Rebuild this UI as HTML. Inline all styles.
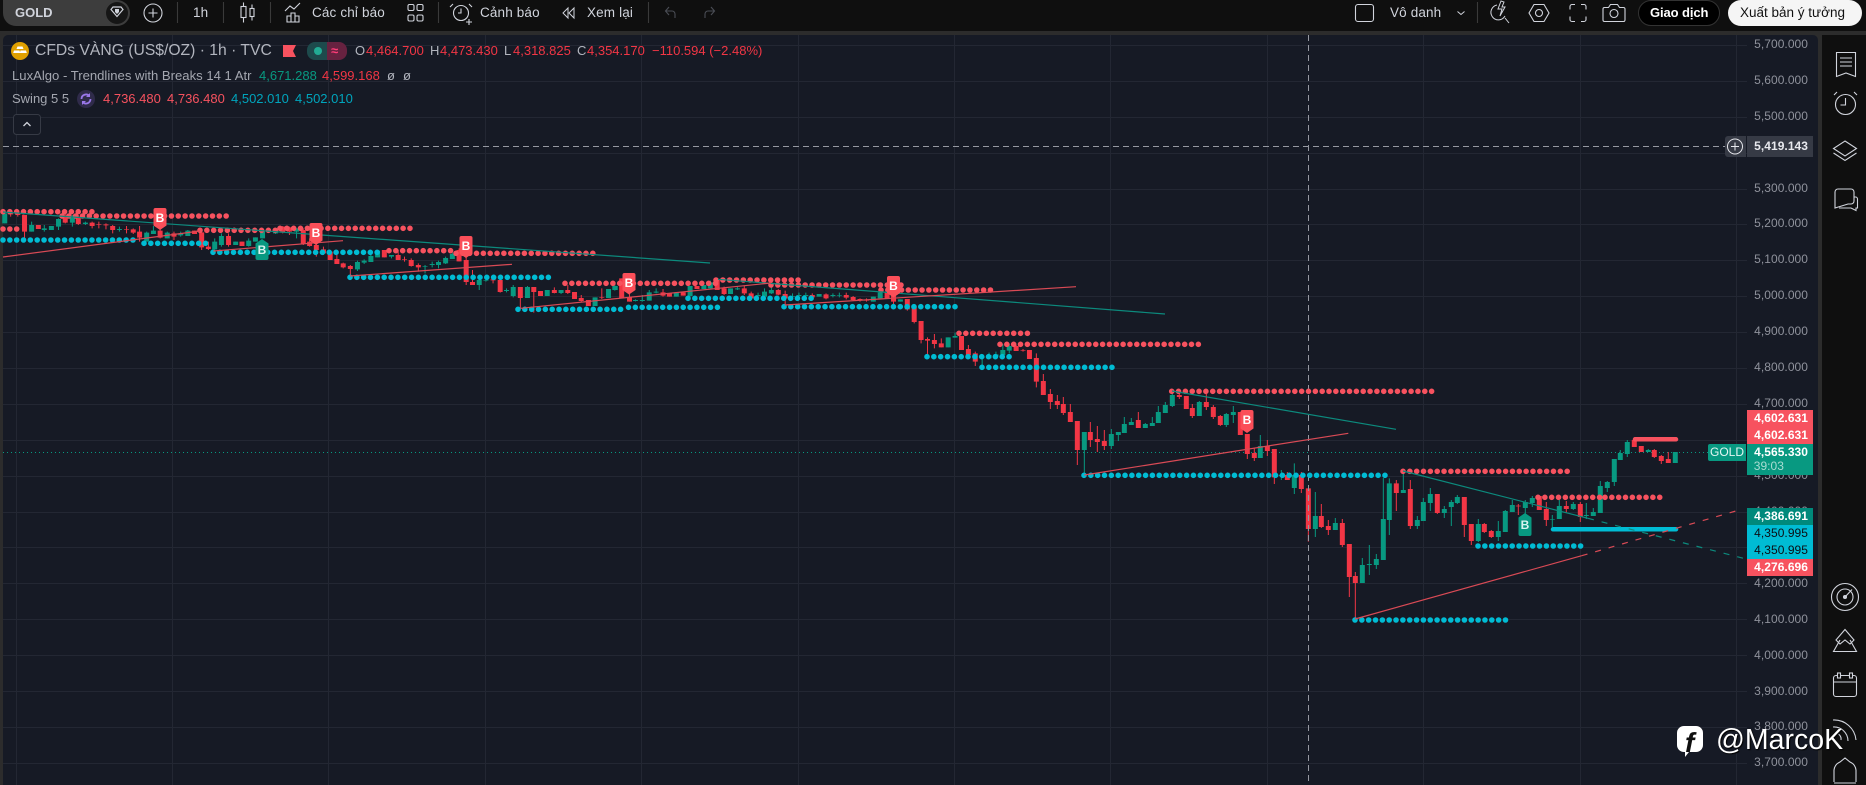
<!DOCTYPE html>
<html><head><meta charset="utf-8"><style>
html,body{margin:0;padding:0;background:#2c2c2c;width:1866px;height:785px;overflow:hidden;font-family:"Liberation Sans","Noto Sans CJK SC",sans-serif}
#top{position:absolute;left:0;top:0;width:1866px;height:31px;background:#0f0f0f}
#side{position:absolute;left:1822px;top:35px;width:44px;height:750px;background:#0f0f0f}
#panel{position:absolute;left:3px;top:35px;width:1815px;height:750px;background:#161a25;border-radius:5px 5px 0 0}
svg.full{position:absolute;left:0;top:0}
.t{position:absolute;white-space:nowrap;line-height:16px;font-size:13px}
.a{position:absolute;right:58px;white-space:nowrap;line-height:16px;font-size:12px;color:#8f929c;letter-spacing:.05px}
.n{color:#d1d4dc;font-size:13.5px;top:5px;letter-spacing:.15px}
.tag{position:absolute;left:1747px;width:66px}
.v{position:absolute;right:58px;font-size:12px;line-height:16px;color:#fff;font-weight:bold;white-space:nowrap;letter-spacing:.05px}
.r{color:#f23645}.gy{color:#b2b5be}
</style></head><body>
<div id="top"></div><div id="panel"></div><div id="side"></div>

<svg class="full" width="1866" height="785" viewBox="0 0 1866 785" fill="none">
<!-- grid -->
<path stroke="#232733" stroke-width="1" d="M3 45.5H1747M3 81.5H1747M3 117.5H1747M3 153.5H1747M3 189.5H1747M3 224.5H1747M3 260.5H1747M3 296.5H1747M3 332.5H1747M3 368.5H1747M3 404.5H1747M3 440.5H1747M3 476.5H1747M3 512.5H1747M3 547.5H1747M3 583.5H1747M3 619.5H1747M3 655.5H1747M3 691.5H1747M3 727.5H1747M3 763.5H1747M16.5 35V785M172.5 35V785M328.5 35V785M485.5 35V785M641.5 35V785M798.5 35V785M954.5 35V785M1110.5 35V785M1267.5 35V785M1423.5 35V785M1580.5 35V785M1736.5 35V785"/>
<path stroke="#089981" stroke-width="1" stroke-dasharray="1 3" d="M3 452.5H1708"/>

<!-- zoom-3 segment -->
<g transform="translate(0 190) scale(.3954 .3333)">
<path vector-effect="non-scaling-stroke" stroke="#089981" stroke-width="1" d="M12 60V100M80 95V125M112 105V125M130 108V120M148 85V120M183 75V110M216 95V105M302 110V125M371 125V155M388 108V132M423 125V145M457 125V140M475 120V138M543 145V185M560 130V170M596 155V165M629 145V170M646 142V155M664 118V145M697 115V132M750 115V145M904 212V243M921 208V222M938 195V216M955 180V202M990 195V205M1075 225V250M1093 215V232M1109 212V235M1127 200V222M1144 188V207M1212 265V300M1229 262V275M1281 295V307M1298 285V322M1334 288V324M1384 300V318M1419 300V312M1505 322V348M1539 297V324M1556 288V300"/>
<path vector-effect="non-scaling-stroke" stroke="#089981" stroke-width="5" d="M12 70V100M80 105V125M112 115V120M130 108V120M148 87V110M183 80V98M216 98V102M302 117V120M371 128V155M388 122V132M423 128V145M457 130V136M475 122V138M543 155V178M560 138V165M596 155V165M629 152V168M646 142V155M664 122V145M697 118V130M750 115V125M904 216V238M921 212V218M938 198V216M955 182V202M990 195V200M1075 228V230M1093 222V225M1109 216V225M1127 204V220M1144 192V207M1212 270V285M1229 270V272M1281 300V303M1298 291V318M1334 291V324M1384 300V318M1419 300V309M1505 322V348M1539 297V324M1556 288V300"/>
<path vector-effect="non-scaling-stroke" stroke="#f23645" stroke-width="1" d="M27 65V80M45 60V80M62 75V145M97 105V117M165 70V100M198 75V105M233 95V115M250 95V115M268 100V118M285 105V130M320 108V130M337 115V132M353 108V155M405 115V145M440 125V150M492 122V132M510 115V180M527 155V180M578 130V170M612 155V168M715 108V130M732 110V135M767 115V165M783 145V170M800 140V200M818 170V195M835 180V210M852 195V222M868 218V235M886 225V260M972 180V202M1007 180V210M1023 200V215M1040 205V230M1058 220V245M1161 175V214M1179 200V285M1195 240V285M1247 262V280M1265 268V308M1316 291V355M1350 291V368M1367 303V318M1402 292V310M1436 285V312M1453 306V327M1470 315V335M1488 330V348M1522 295V327"/>
<path vector-effect="non-scaling-stroke" stroke="#f23645" stroke-width="5" d="M27 68V73M45 70V75M62 75V125M97 105V117M165 80V98M198 80V102M233 98V108M250 103V105M268 103V106M285 108V120M320 118V120M337 118V128M353 125V143M405 122V143M440 130V140M492 122V132M510 127V172M527 170V177M578 138V165M612 155V168M715 110V128M732 112V125M767 120V162M783 155V168M800 165V180M818 178V190M835 185V210M852 207V222M868 220V232M886 228V237M972 180V202M1007 195V210M1023 207V209M1040 210V228M1058 225V232M1161 180V214M1179 210V276M1195 276V285M1247 268V271M1265 270V306M1316 291V324M1350 291V306M1367 303V318M1402 300V309M1436 300V309M1453 306V327M1470 324V333M1488 330V348M1522 322V324"/>
</g>

<!-- zoom-4 segment -->
<g transform="translate(500 260) scale(.4592 .3333)">
<path vector-effect="non-scaling-stroke" stroke="#089981" stroke-width="1" d="M250 72V92M295 118V124M310 105V125M325 90V122M340 85V100M384 97V110M414 78V110M444 75V87M458 62V85M502 85V102M517 80V90M562 98V115M576 85V110M591 72V102M637 100V118M651 98V115M666 98V112M695 102V110M725 100V112M739 98V112M813 110V125M828 85V115M872 118V125M976 232V262M991 218V233M1050 285V318M1065 278V295M1080 275V295M1095 252V288M1109 252V280"/>
<path vector-effect="non-scaling-stroke" stroke="#089981" stroke-width="5" d="M250 78V90M295 120V123M310 120V123M325 97V122M340 95V98M384 97V110M414 78V108M444 75V87M458 67V85M502 85V102M517 85V88M562 105V108M576 95V110M591 90V100M637 108V110M651 105V108M666 105V108M695 102V110M725 105V108M739 105V107M813 110V125M828 97V115M872 118V125M976 232V262M991 228V233M1050 290V293M1065 285V295M1080 283V290M1095 270V285M1109 258V272"/>
<path vector-effect="non-scaling-stroke" stroke="#f23645" stroke-width="1" d="M265 55V115M282 100V125M355 87V110M369 100V110M399 97V107M429 78V87M473 57V90M488 80V105M532 78V105M547 95V118M606 87V106M621 92V135M680 100V118M710 100V118M754 98V118M769 108V122M784 115V125M798 115V125M843 97V117M857 100V135M887 117V152M902 140V190M917 183V250M931 232V290M946 222V265M961 235V262M1005 228V270M1020 255V290M1035 275V318M1124 255V273M1139 267V275M1153 270V297M1168 280V382"/>
<path vector-effect="non-scaling-stroke" stroke="#f23645" stroke-width="5" d="M265 55V115M282 112V125M355 97V107M369 100V110M399 97V107M429 78V87M473 57V90M488 85V102M532 85V100M547 100V115M606 90V104M621 102V115M680 105V112M710 103V115M754 105V113M769 111V120M784 117V120M798 120V122M843 97V117M857 105V125M887 117V148M902 140V186M917 183V240M931 237V242M946 240V252M961 250V262M1005 228V270M1020 267V285M1035 280V305M1124 258V273M1139 270V272M1153 270V297M1168 294V365"/>
</g>

<!-- zoom-5 segment -->
<g transform="translate(1040 370) scale(.3333)">
<path vector-effect="non-scaling-stroke" stroke="#089981" stroke-width="1" d="M133 186V315M214 177V237M235 186V213M253 141V189M274 144V165M316 159V174M337 141V168M355 108V159M376 96V129M397 63V111M478 93V138M559 129V171M580 108V159M661 195V264"/>
<path vector-effect="non-scaling-stroke" stroke="#089981" stroke-width="5" d="M133 186V240M214 192V228M235 186V195M253 162V189M274 156V165M316 162V174M337 159V168M355 126V159M376 105V129M397 75V108M478 96V138M559 132V165M580 126V135M661 228V264"/>
<path vector-effect="non-scaling-stroke" stroke="#f23645" stroke-width="1" d="M10 12V75M31 57V117M52 75V117M70 81V135M91 102V156M112 153V285M151 156V231M172 168V246M193 180V240M295 126V174M418 63V87M439 78V117M457 102V144M499 72V120M520 105V147M541 135V168M601 126V195M622 192V267M643 234V273"/>
<path vector-effect="non-scaling-stroke" stroke="#f23645" stroke-width="5" d="M10 33V75M31 72V96M52 93V105M70 102V129M91 126V156M112 153V240M151 186V210M172 207V216M193 213V228M295 150V174M418 75V81M439 78V117M457 114V138M499 96V111M520 111V141M541 138V165M601 126V195M622 192V252M643 249V264"/>
</g>

<!-- zoom-6 segment -->
<g transform="translate(1260 420) scale(.3333)">
<path vector-effect="non-scaling-stroke" stroke="#089981" stroke-width="1" d="M64 150V180M103 130V222M166 216V351M226 294V330M307 414V489M328 375V465M349 402V447M370 174V420M388 175V345M430 153V219M472 288V327M490 234V303M511 204V273M553 258V294M574 240V318M592 225V252M655 297V366M715 303V363M736 270V336M757 240V276M796 240V282M817 228V261M877 285V321M898 240V297M940 246V270M979 249V297M1000 264V288M1021 183V279M1042 183V216M1063 117V198M1081 90V120M1102 60V111M1165 87V96M1246 96V129"/>
<path vector-effect="non-scaling-stroke" stroke="#089981" stroke-width="5" d="M64 165V168M103 165V204M166 288V327M226 309V330M307 435V489M328 432V435M349 417V435M370 297V420M388 190V300M430 210V219M472 300V318M490 246V303M511 222V249M553 267V279M574 246V261M592 231V249M655 312V363M715 333V351M736 273V336M757 255V276M796 246V264M817 234V249M877 297V299M898 258V297M940 252V267M979 285V288M1000 276V288M1021 198V279M1042 186V204M1063 117V186M1081 99V120M1102 66V102M1165 90V96M1246 96V129"/>
<path vector-effect="non-scaling-stroke" stroke="#f23645" stroke-width="1" d="M22 60V108M43 87V192M82 156V180M124 156V219M145 205V365M184 252V324M205 300V345M247 297V381M268 372V531M286 456V600M409 180V273M451 180V327M532 222V282M613 231V351M634 312V375M673 309V339M694 330V354M775 252V285M838 228V270M859 246V318M919 243V279M961 246V306M1123 60V81M1144 78V96M1183 87V114M1204 105V132M1225 96V129"/>
<path vector-effect="non-scaling-stroke" stroke="#f23645" stroke-width="5" d="M22 78V93M43 87V172M82 165V180M124 165V207M145 205V327M184 288V321M205 318V330M247 309V375M268 372V471M286 468V489M409 190V219M451 207V318M532 222V279M613 231V315M634 312V363M673 312V336M694 333V351M775 257V259M838 228V270M859 267V300M919 258V267M961 252V291M1123 60V81M1144 78V96M1183 90V111M1204 108V123M1225 117V129"/>
</g>

<!-- crosshair -->
<path stroke="#9598a1" stroke-width="1" stroke-dasharray="6 4" d="M1308.5 35V785M3 146.5H1725"/>

<!-- dot rows -->
<g stroke="#f7525f" stroke-width="5.600" stroke-linecap="round" stroke-dasharray="0 6.84">
<path d="M3 211.7H93M62 216H230M3 229H20M200 230.3H277M280 228.3H413M389 250.7H456M456 253.3H597M565 283.3H716M716 280H801M771 285H907M881 290H992M959 333.3H1032M1000 344.3H1203M1171.7 391.3H1433M1403 471.3H1570M1538 497.3H1604M1605 497.3H1664"/>
</g>
<g stroke="#00bcd4" stroke-width="5.600" stroke-linecap="round" stroke-dasharray="0 6.84">
<path d="M3 240H139M144 243.3H206M213 252.3H380M350 277.3H550M518 309.3H625M628.5 307.3H720M688 298.3H815M784 306.7H958M927 356.7H1011M982 367.3H1114M1084 475.3H1386M1478 546H1582M1355 620H1508"/>
</g>
<path stroke="#f7525f" stroke-width="4.5" stroke-linecap="round" d="M1635 439.3H1676"/>
<path stroke="#00bcd4" stroke-width="4.5" stroke-linecap="round" d="M1553 529.3H1676"/>

<!-- trend lines -->
<g stroke-width="1.2">
<path stroke="#0c8a7d" d="M3 212L710 263M718 279.3L1165 314M1172 391L1396 429.3M1403 471L1588 518.3"/>
<path stroke="#0c8a7d" stroke-dasharray="6 8" d="M1588 518.3L1746 559"/>
<path stroke="#d94a55" d="M3 257L200 231M213.4 251L343 240.7M350 276L512 264.3M520.6 308.3L771 283M784.7 305L1076 286.7M1084.3 475L1348.3 433.3M1355 619L1581.7 555.7"/>
<path stroke="#d94a55" stroke-dasharray="6 8" d="M1581.7 555.7L1741.7 509.3"/>
</g>

<!-- B labels -->
<g font-family="Liberation Sans,sans-serif" font-size="12" font-weight="bold" text-anchor="middle">
<g fill="#fb4f59">
<path d="M155.5 208h9a2 2 0 0 1 2 2v15.500l-6.500 4.500l-6.500-4.500V210a2 2 0 0 1 2-2z"/>
<path d="M311.500 223h9a2 2 0 0 1 2 2v15.500l-6.500 4.500l-6.500-4.500V225a2 2 0 0 1 2-2z"/>
<path d="M461.500 236h9a2 2 0 0 1 2 2v15.500l-6.500 4.500l-6.500-4.500V238a2 2 0 0 1 2-2z"/>
<path d="M624.500 273h9a2 2 0 0 1 2 2v15l-6.500 4.500l-6.500-4.500V275a2 2 0 0 1 2-2z"/>
<path d="M889 276h9a2 2 0 0 1 2 2v15l-6.500 4.500l-6.500-4.500V278a2 2 0 0 1 2-2z"/>
<path d="M1242.500 410h9a2 2 0 0 1 2 2v16.500l-6.500 4.500l-6.500-4.500V412a2 2 0 0 1 2-2z"/>
</g>
<g fill="#089981">
<path d="M262 239l6.500 4.500V258a2 2 0 0 1-2 2h-9a2 2 0 0 1-2-2v-14.500z"/>
<path d="M1525 513l6.500 4.500V534a2 2 0 0 1-2 2h-9a2 2 0 0 1-2-2v-16.500z"/>
</g>
<g fill="#fff">
<text x="160" y="222">B</text><text x="316" y="237">B</text><text x="466" y="250">B</text><text x="629" y="287">B</text><text x="893.500" y="290">B</text><text x="1247" y="424">B</text>
</g>
<g fill="#d8f3ef">
<text x="262" y="254">B</text><text x="1525" y="529">B</text>
</g>
</g>

<!-- legend icons -->
<circle cx="20" cy="51" r="9" fill="#e0a000"/>
<path fill="#fff" d="M17.500 46.500h5l1 2.500h-7zM14 50.500h5.500l.8 2.500H13.200zM20.500 50.500H26l.8 2.500h-7z"/>
<path fill="#f7525f" d="M283 45h13l-3 6l3 6h-13z"/>
<rect x="307" y="42" width="20" height="18" rx="8" fill="#1d4a4c"/><rect x="317" y="42" width="10" height="18" fill="#1d4a4c"/>
<rect x="327" y="42" width="20" height="18" rx="8" fill="#672240"/><rect x="327" y="42" width="10" height="18" fill="#672240"/>
<circle cx="318" cy="51" r="4" fill="#22ab94"/>
<circle cx="86" cy="99" r="9" fill="#2f2b4a"/>
<path stroke="#9a78ea" stroke-width="1.800" d="M81.500 99a4.500 4.500 0 0 1 8-2.800M90.500 99a4.500 4.500 0 0 1-8 2.800"/>
<path fill="#9a78ea" d="M90 93v4h-4zM82 105v-4h4z"/>
<rect x="13.500" y="114.500" width="27" height="20" rx="3" stroke="#363a45" fill="#161a25"/>
<path stroke="#d1d4dc" stroke-width="1.300" d="M23.500 126l3.500-3.500l3.500 3.500"/>

<!-- top bar shapes -->
<path fill="#3d3d3d" d="M3 0H117V26H16A13 13 0 0 1 3 13z"/>
<circle cx="117" cy="13" r="13" fill="#3d3d3d"/>
<circle cx="117" cy="13" r="11" fill="#161616"/>
<path stroke="#d1d4dc" stroke-width="1.200" d="M111 9.500l2-2.500h8l2 2.500l-6 7z"/>
<path fill="#d1d4dc" d="M115 9h4v3l-2 2l-2-2z"/>
<g stroke="#d1d4dc" stroke-width="1.100">
<circle cx="153" cy="13" r="9"/><path d="M148.500 13h9M153 8.500v9"/>
<path stroke="#3a3a3a" d="M177.500 2v21M223.500 2v21M270.500 2v21M438.500 2v21M648.500 2v21M1477.500 2v21"/>
<path d="M243.500 2.500v20"/><rect x="241" y="6.500" width="5" height="11" fill="#0f0f0f"/>
<path d="M252 4.500v16"/><rect x="250" y="8.500" width="4" height="8" fill="#0f0f0f"/>
<path d="M287 22v-6h4v6zM291 22v-9h4v9zM295 22v-6h4v6zM285 11l5-5l4 3l6-6"/>
<rect x="408" y="4.500" width="6" height="6" rx="1.500"/><rect x="417" y="4.500" width="6" height="6" rx="1.500"/><rect x="408" y="15" width="6" height="6" rx="1.500"/><rect x="417" y="15" width="6" height="6" rx="1.500"/>
<circle cx="461" cy="13" r="7.500"/><path d="M461 8.500v4.500h-3M453 4l-3 3M469 4l3 3M466 22h6M469 19v6"/>
<path d="M568 8l-5 5l5 5zM574 8l-5 5l5 5z" stroke-width="1"/>
<rect x="1355.500" y="4.500" width="18" height="17" rx="2.500"/>
<path stroke-width="1" d="M1457.500 11.500l3.500 3l3.500-3"/>
<path d="M1497 5a7.500 7.500 0 1 0 8 11M1505 18l4 5M1501 1l-3 8h4l-2 7l5-9h-3l2-5z" stroke-width="1"/>
<path d="M1534 4.500h10l5 8.500l-5 8.500h-10l-5-8.500z"/><circle cx="1539" cy="13" r="3.500"/>
<path d="M1570 9.500v-3a2 2 0 0 1 2-2h3M1581 4.500h3a2 2 0 0 1 2 2v3M1570 16.500v3a2 2 0 0 0 2 2h3M1586 16.500v3a2 2 0 0 1-2 2h-3"/>
<path d="M1605 7.500h4l2-3h7l2 3h4a1.500 1.500 0 0 1 1.500 1.500v11a1.500 1.500 0 0 1-1.500 1.500h-19a1.500 1.500 0 0 1-1.500-1.500V9a1.500 1.500 0 0 1 1.500-1.500z" transform="translate(-.5 0)"/><circle cx="1614" cy="13.500" r="4"/>
</g>
<g stroke="#4a4d55" stroke-width="1.100"><path d="M675 18v-4a3 3 0 0 0-3-3h-6M669 7l-3.500 4l3.500 4M705 18v-4a3 3 0 0 1 3-3h6M711 7l3.500 4l-3.500 4"/></g>
<rect x="1638.500" y="0.500" width="81" height="25" rx="12.500" fill="#000" stroke="#333"/>
<rect x="1728" y="0" width="134" height="26" rx="13" fill="#f5f5f5"/>

<!-- side icons -->
<g stroke="#d1d4dc" stroke-width="1.100">
<path d="M1836.500 52.500h19v24l-9.500-3.500l-9.500 3.500zM1840 58h12M1840 62h12M1840 66h12"/>
<circle cx="1845.500" cy="104.500" r="10"/><path d="M1845.500 98v7h-5M1834 95l3-3M1857 95l-3-3"/>
<path d="M1845 141l11.500 7.500l-11.500 7.500l-11.500-7.500zM1833.500 153l11.500 7.500l11.500-7.500"/>
<path d="M1835 192a3 3 0 0 1 3-3h13a3 3 0 0 1 3 3v9a3 3 0 0 1-3 3h-3l-13 4zM1854 197h1.500a2 2 0 0 1 2 2v9l-1.500 0l0 2.500l-5-2.500h-12"/>
<circle cx="1845" cy="597" r="13.500"/><circle cx="1845" cy="597" r="8"/><circle cx="1845" cy="597" r="1.500" fill="#d1d4dc"/><path d="M1845 597l7-7.500"/>
<path d="M1845 629.500l9 10.500l-4 4l-5-4l-5 4l-4-4zM1840 640l-6.500 11.500h23l-6.500-11.500"/>
<rect x="1833.500" y="675.500" width="23" height="21" rx="2.500"/><path d="M1833.500 682h23"/><rect x="1837.500" y="673" width="3" height="5" fill="#0f0f0f"/><rect x="1849.500" y="673" width="3" height="5" fill="#0f0f0f"/>
<path d="M1833 720a22 22 0 0 1 23 20M1833 727a14 14 0 0 1 15 14M1835 733a6 6 0 0 1 6 7"/>
<path d="M1834 782v-12a10 10 0 0 1 6-8l5-4l5 4a10 10 0 0 1 6 8v12M1834 783h22"/>
</g>

<!-- watermark icon -->
<path fill="#fff" d="M1684 726h12a7 7 0 0 1 7 7v12a7 7 0 0 1-7 7h-7l-4 5v-5h-1a7 7 0 0 1-7-7v-12a7 7 0 0 1 7-7z"/>
<text x="1685" y="752" font-family="Liberation Sans,sans-serif" font-size="28" font-weight="bold" font-style="italic" fill="#0f0f0f">f</text>
</svg>

<!-- top bar text -->
<div class="t" style="left:15px;top:5px;font-weight:bold;color:#d1d4dc;font-size:13px">GOLD</div>
<div class="t n" style="left:193px">1h</div>
<div class="t n" style="left:312px">Các chỉ báo</div>
<div class="t n" style="left:480px">Cảnh báo</div>
<div class="t n" style="left:587px">Xem lại</div>
<div class="t n" style="left:1390px">Vô danh</div>
<div class="t" style="left:1650px;top:5px;color:#fff;font-size:13px;font-weight:bold;letter-spacing:-.1px">Giao dịch</div>
<div class="t" style="left:1740px;top:5px;color:#111;font-size:13.500px">Xuất bản ý tưởng</div>

<!-- legend -->
<div class="t gy" style="left:35px;top:43px;font-size:15.700px">CFDs VÀNG (US$/OZ) · 1h · TVC</div>
<div class="t" style="left:331px;top:43px;color:#ff3d78;font-size:13px;font-weight:bold">≈</div>
<div class="t gy" style="left:355px;top:43px">O</div><div class="t r" style="left:366px;top:43px">4,464.700</div>
<div class="t gy" style="left:430px;top:43px">H</div><div class="t r" style="left:440px;top:43px">4,473.430</div>
<div class="t gy" style="left:504px;top:43px">L</div><div class="t r" style="left:513px;top:43px">4,318.825</div>
<div class="t gy" style="left:577px;top:43px">C</div><div class="t r" style="left:587px;top:43px">4,354.170</div>
<div class="t r" style="left:652px;top:43px">−110.594 (−2.48%)</div>
<div class="t" style="left:12px;top:68px;color:#a4a7b0;font-size:13.100px">LuxAlgo - Trendlines with Breaks 14 1 Atr</div>
<div class="t" style="left:259px;top:68px;color:#089981">4,671.288</div>
<div class="t r" style="left:322px;top:68px">4,599.168</div>
<div class="t" style="left:387px;top:68px;color:#b2b5be">ø</div><div class="t" style="left:403px;top:68px;color:#b2b5be">ø</div>
<div class="t" style="left:12px;top:91px;color:#a4a7b0">Swing 5 5</div>
<div class="t" style="left:103px;top:91px;color:#f7525f">4,736.480</div>
<div class="t" style="left:167px;top:91px;color:#f7525f">4,736.480</div>
<div class="t" style="left:231px;top:91px;color:#00a5bd">4,502.010</div>
<div class="t" style="left:295px;top:91px;color:#00a5bd">4,502.010</div>

<!-- axis -->
<div class="a" style="top:36px">5,700.000</div><div class="a" style="top:72px">5,600.000</div><div class="a" style="top:108px">5,500.000</div><div class="a" style="top:180px">5,300.000</div><div class="a" style="top:215px">5,200.000</div><div class="a" style="top:251px">5,100.000</div><div class="a" style="top:287px">5,000.000</div><div class="a" style="top:323px">4,900.000</div><div class="a" style="top:359px">4,800.000</div><div class="a" style="top:395px">4,700.000</div><div class="a" style="top:467px">4,500.000</div><div class="a" style="top:503px">4,400.000</div><div class="a" style="top:575px">4,200.000</div><div class="a" style="top:611px">4,100.000</div><div class="a" style="top:647px">4,000.000</div><div class="a" style="top:683px">3,900.000</div><div class="a" style="top:718px">3,800.000</div><div class="a" style="top:754px">3,700.000</div>

<!-- price tags -->
<div style="position:absolute;left:1725px;top:136px;width:21px;height:21px;background:#363a45;border-radius:3px 0 0 3px"></div>
<svg style="position:absolute;left:1725px;top:136px" width="21" height="21" fill="none"><circle cx="10" cy="10.500" r="7.500" stroke="#e8e9ee"/><path stroke="#e8e9ee" d="M6 10.500h8M10 6.500v8"/></svg>
<div class="tag" style="top:136px;height:21px;background:#363a45"></div>
<div class="v" style="top:138px;color:#e8e9ee">5,419.143</div>
<div class="tag" style="top:410px;height:34px;background:#f7525f"></div>
<div class="v" style="top:410px">4,602.631</div><div class="v" style="top:427px">4,602.631</div>
<div class="tag" style="top:444px;height:31px;background:#089981"></div>
<div class="v" style="top:444px">4,565.330</div>
<div class="v" style="top:458px;right:82px;font-weight:normal;color:#a8dcd2">39:03</div>
<div class="tag" style="top:508px;height:17px;background:#00897b"></div>
<div class="v" style="top:508px">4,386.691</div>
<div class="tag" style="top:525px;height:34px;background:#00bcd4"></div>
<div class="v" style="top:525px;color:#0b0e14;font-weight:normal">4,350.995</div><div class="v" style="top:542px;color:#0b0e14;font-weight:normal">4,350.995</div>
<div class="tag" style="top:559px;height:17px;background:#f7525f"></div>
<div class="v" style="top:559px">4,276.696</div>
<div style="position:absolute;left:1708px;top:444px;width:38px;height:17px;background:#089981;border-radius:2px 0 0 2px;color:#e4f6f3;font-size:12px;line-height:17px;text-align:center">GOLD</div>

<!-- watermark text -->
<div style="position:absolute;left:1716px;top:722px;font-size:28.500px;line-height:36px;color:#fff;white-space:nowrap;text-shadow:1px 1px 1px #000">@MarcoK</div>
</body></html>
